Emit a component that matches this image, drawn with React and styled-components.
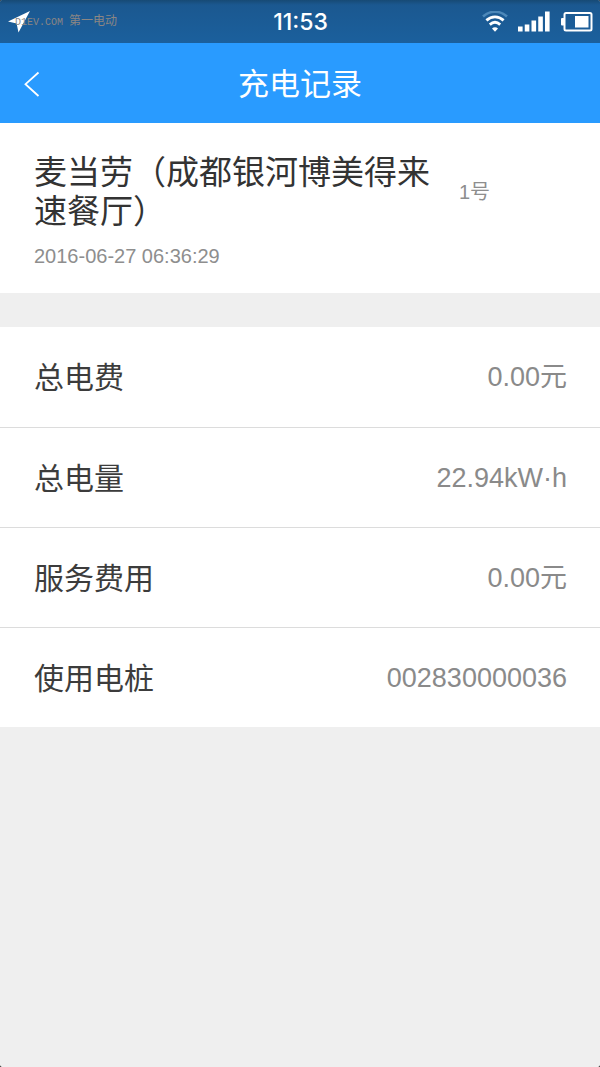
import styled, { createGlobalStyle } from 'styled-components';

const records = [
  { label: '总电费', value: '0.00元' },
  { label: '总电量', value: '22.94kW·h' },
  { label: '服务费用', value: '0.00元' },
  { label: '使用电桩', value: '002830000036' },
];

const signalBars = [5, 7, 11, 15, 20];

const App = () => {
  return (
    <>
      <GlobalStyle />
      <Page>
        <StatusBar>
          <StatusLeft>
            <svg width="22" height="22" viewBox="0 0 22 22" aria-hidden="true">
              <path d="M22 0 10.5 21.5 8.6 12.6 0 10.6Z" fill="#fff" />
            </svg>
            <Watermark>
              <WatermarkSite>D1EV.COM </WatermarkSite>第一电动
            </Watermark>
          </StatusLeft>
          <Clock>11:53</Clock>
          <StatusRight>
            <svg width="26" height="21" viewBox="0 0 26 21" fill="none" aria-hidden="true">
              <path d="M1 5.5C8 -0.8 18 -0.8 25 5.5" stroke="#4d88b9" strokeWidth="2.6" />
              <path d="M4.4 9.4C9.6 4.6 16.4 4.6 21.6 9.4" stroke="#fff" strokeWidth="2.8" />
              <path d="M7.8 13.6C11 10.8 15 10.8 18.2 13.6" stroke="#fff" strokeWidth="2.8" />
              <path d="M10 17.4C11.8 15.8 14.2 15.8 16 17.4L13 20.8Z" fill="#fff" />
            </svg>
            <svg width="32" height="21" viewBox="0 0 32 21" fill="#fff" aria-hidden="true">
              {signalBars.map((h, i) => (
                <rect key={h} x={i * 6.75} y={20.5 - h} width="4.6" height={h} />
              ))}
            </svg>
            <svg width="33" height="21" viewBox="0 0 33 21" fill="none" aria-hidden="true">
              <rect x="4.5" y="2" width="27" height="17.5" rx="1.5" stroke="#fff" strokeWidth="2" />
              <rect x="1" y="7" width="3.5" height="7.5" rx="1" fill="#fff" />
              <rect x="15" y="5" width="13.5" height="11.5" fill="#fff" />
            </svg>
          </StatusRight>
        </StatusBar>

        <Header>
          <BackButton type="button" aria-label="返回">
            <svg width="16" height="26" viewBox="0 0 16 26" fill="none" aria-hidden="true">
              <path d="M14.5 1.5 1.5 13.2 14.5 25" stroke="#fff" strokeWidth="1.8" />
            </svg>
          </BackButton>
          <Title>充电记录</Title>
        </Header>

        <Station>
          <StationRow>
            <StationName>麦当劳（成都银河博美得来速餐厅）</StationName>
            <StationNumber>1号</StationNumber>
          </StationRow>
          <StationTime>2016-06-27 06:36:29</StationTime>
        </Station>

        <RecordList>
          {records.map(({ label, value }) => (
            <RecordRow key={label}>
              <RecordLabel>{label}</RecordLabel>
              <RecordValue>{value}</RecordValue>
            </RecordRow>
          ))}
        </RecordList>
      </Page>
    </>
  );
};

// Styled components
const GlobalStyle = createGlobalStyle`
  * {
    box-sizing: border-box;
  }
  body {
    margin: 0;
    background: #000;
    font-family: "Liberation Sans", "Noto Sans CJK SC", sans-serif;
  }
`;

const Page = styled.div`
  min-height: 100vh;
  background: #efefef;
  border-radius: 2px;
  overflow: hidden;
`;

const StatusBar = styled.div`
  display: grid;
  grid-template-columns: 1fr auto 1fr;
  align-items: center;
  height: 43px;
  padding: 0 7px 0 8px;
  background: linear-gradient(#174a75, #1b5890 5px, #1b609d);
`;

const StatusLeft = styled.div`
  position: relative;
  display: flex;
`;

/* sits on top of the location arrow */
const Watermark = styled.span`
  position: absolute;
  left: 7px;
  top: 2px;
  font-size: 12px;
  line-height: 16px;
  color: #8b8684;
  white-space: pre;
`;

const WatermarkSite = styled.span`
  font-family: "Liberation Mono", monospace;
  font-size: 10px;
`;

const Clock = styled.time`
  font-family: Inter, "Liberation Sans", sans-serif;
  font-size: 23px;
  font-weight: 500;
  line-height: 28px;
  color: #fff;
`;

const StatusRight = styled.div`
  display: flex;
  justify-content: flex-end;
  gap: 10px;
`;

const Header = styled.header`
  display: grid;
  grid-template-columns: 1fr auto 1fr;
  align-items: center;
  height: 80px;
  padding: 2px 24px 0;
  background: #299bff;
`;

const BackButton = styled.button`
  display: flex;
  justify-self: start;
  padding: 0;
  border: 0;
  background: none;
  cursor: pointer;
`;

const Title = styled.h1`
  margin: 0;
  padding-top: 2px;
  font-size: 31px;
  font-weight: 400;
  line-height: 40px;
  color: #fff;
`;

const Station = styled.section`
  padding: 30px 34px 23px;
  background: #fff;
`;

const StationRow = styled.div`
  display: flex;
  align-items: center;
  gap: 24px;
`;

const StationName = styled.h2`
  flex: 0 1 401px;
  margin: 0;
  font-size: 33px;
  font-weight: 400;
  line-height: 39px;
  color: #333;
`;

const StationNumber = styled.span`
  font-size: 20px;
  line-height: 28px;
  color: #8e8e8e;
`;

const StationTime = styled.p`
  margin: 11px 0 0;
  font-size: 20px;
  line-height: 28px;
  color: #8e8e8e;
`;

const RecordList = styled.dl`
  margin: 34px 0 0;
  background: #fff;
`;

const RecordRow = styled.div`
  display: flex;
  align-items: center;
  justify-content: space-between;
  min-height: 100px;
  padding: 0 33px 0 34px;

  & + & {
    border-top: 1px solid #dcdcdc;
  }
`;

const RecordLabel = styled.dt`
  padding-top: 2px;
  font-size: 30px;
  line-height: 40px;
  color: #3c3c3c;
`;

const RecordValue = styled.dd`
  margin: 0;
  font-size: 27px;
  line-height: 40px;
  color: #8a8a8a;
`;

export default App;
